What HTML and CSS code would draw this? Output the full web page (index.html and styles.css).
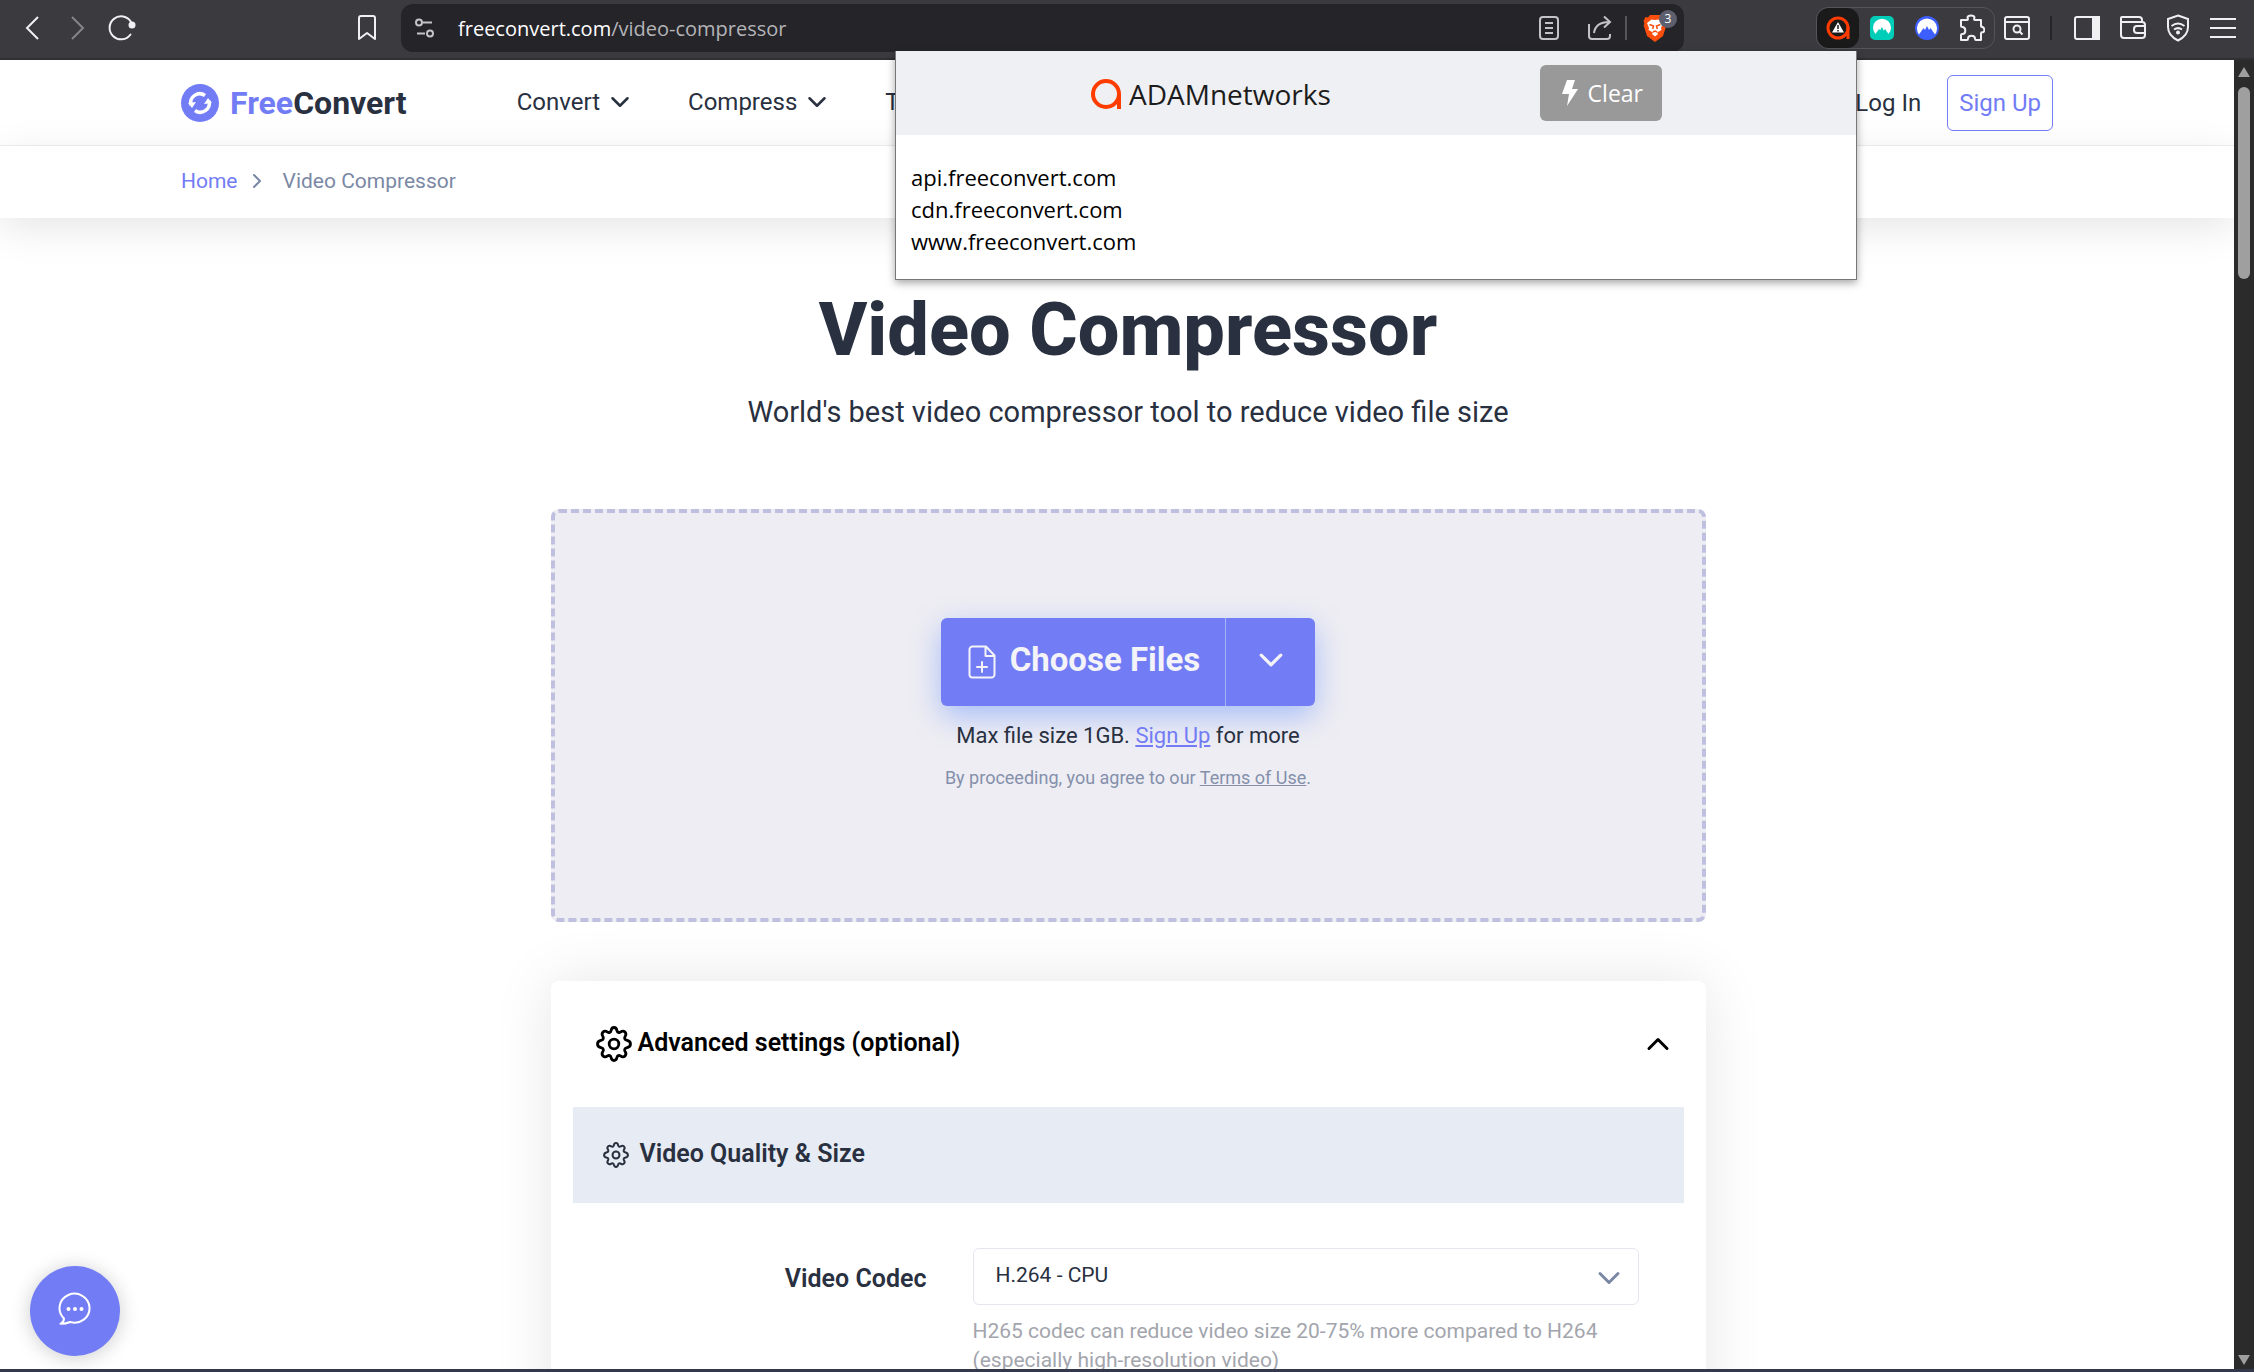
FILE: index.html
```html
<!DOCTYPE html>
<html lang="en">
<head>
    <meta charset="UTF-8">
    <title>Video Compressor</title>
    <link rel="stylesheet" href="styles.css">
</head>
<body>

<!-- icons used more than once -->
<svg class="sprite" aria-hidden="true">
    <symbol id="chevron" viewBox="0 0 24 24">
        <path d="M3 7.500l9 9 9-9" fill="none" stroke="currentColor" stroke-width="3" stroke-linecap="round" stroke-linejoin="round"/>
    </symbol>
    <symbol id="gear" viewBox="0 0 36 36">
        <path d="M18 1.500c1.800 0 2.600 1 3 3.200.3 1.600 2 2.300 3.400 1.400 1.900-1.300 3.300-1.300 4.600 0s1.300 2.700 0 4.600c-.9 1.400-.2 3.100 1.400 3.400 2.200.4 4.100 1.400 4.100 3.900s-1.900 3.500-4.100 3.900c-1.600.3-2.300 2-1.400 3.400 1.300 1.900 1.300 3.300 0 4.600s-2.700 1.300-4.600 0c-1.400-.9-3.100-.2-3.400 1.400-.4 2.200-1.200 3.200-3 3.200s-2.600-1-3-3.200c-.3-1.600-2-2.300-3.400-1.400-1.900 1.300-3.300 1.300-4.600 0s-1.300-2.700 0-4.600c.9-1.400.2-3.100-1.400-3.400-2.200-.4-4.100-1.400-4.100-3.900s1.900-3.500 4.100-3.900c1.600-.3 2.300-2 1.400-3.400-1.300-1.900-1.300-3.300 0-4.600s2.700-1.300 4.600 0c1.400.9 3.100.2 3.400-1.400.4-2.200 1.200-3.200 3-3.200z" fill="none" stroke="currentColor" stroke-width="2.800" stroke-linejoin="round"/>
        <circle cx="18" cy="18" r="4.800" fill="none" stroke="currentColor" stroke-width="2.800"/>
    </symbol>
</svg>

<div class="toolbar">
    <div class="navButtons">
        <button aria-label="Back"><svg width="26" height="26" viewBox="0 0 26 26"><path d="M18 2L7 13l11 11"/></svg></button>
        <button aria-label="Forward" class="dim"><svg width="26" height="26" viewBox="0 0 26 26"><path d="M8 2l11 11L8 24"/></svg></button>
        <button aria-label="Reload"><svg width="28" height="28" viewBox="0 0 28 28"><path d="M22.500 20.500A11.500 11.500 0 1 1 23 8" stroke-linecap="round"/><circle cx="24" cy="11" r="3.500" fill="currentColor" stroke="none"/></svg></button>
    </div>
    <button aria-label="Bookmark" class="bookmark"><svg width="20" height="28" viewBox="0 0 20 28"><path d="M2 4a2 2 0 0 1 2-2h12a2 2 0 0 1 2 2v21l-8-6-8 6z" stroke-linejoin="round"/></svg></button>
    <div class="addressBar">
        <svg width="20" height="20" viewBox="0 0 20 20"><circle cx="4" cy="4.500" r="3"/><path d="M8 4.500h9M2 15.500h8"/><circle cx="15" cy="15.500" r="3"/></svg>
        <div class="url">freeconvert.com<span>/video-compressor</span></div>
        <button aria-label="Reader"><svg width="20" height="24" viewBox="0 0 20 24"><rect x="1" y="1" width="18" height="22" rx="3"/><path d="M6 7h8M6 12h8M6 17h8"/></svg></button>
        <button aria-label="Share" class="share"><svg width="26" height="26" viewBox="0 0 26 26"><path d="M2 9v12a3 3 0 0 0 3 3h15a3 3 0 0 0 3-3v-2M7 18c1-7 6-11 15-11M17 1.500L23 7l-6 5.500"/></svg></button>
        <div class="divider"></div>
        <button aria-label="Shields" class="shields">
            <svg class="filled" width="24" height="28" viewBox="0 0 24 28">
                <path d="M7 1h10l2 2.500 2.500-.5 2 4-.8 2.500.6 2L20 22l-8 6-8-6L.7 11.500l.6-2L.5 7l2-4 2.500.5z" fill="#fb4d0b"/>
                <path d="M8.500 5.500L12 6l3.500-.5L20 9l-2 5 .5 2-4.500 2.500 1 1.500-3 2.500L9 20l1-1.500L5.500 16l.5-2-2-5z" fill="#fff"/>
                <path d="M6.500 10.500l4 1.500-.8 3M17.500 10.500l-4 1.500.8 3M10 18l2-1 2 1" fill="none" stroke="#fb4d0b" stroke-width="1.500"/>
            </svg>
            <span class="badge">3</span>
        </button>
    </div>
    <div class="extensions">
        <button aria-label="ADAMnetworks" class="active"><svg class="filled" width="24" height="24" viewBox="0 0 24 24"><circle cx="12" cy="12" r="10" fill="none" stroke="#ff3c00" stroke-width="3"/><path d="M22 11v12" stroke="#ff3c00" stroke-width="3"/><path d="M12 6l6 10.500H6z" fill="#fff"/><path d="M12 9v4M12 14v1.500" stroke="#1b1a1b" stroke-width="1.500"/></svg></button>
        <button aria-label="NordPass"><svg class="filled" width="24" height="24" viewBox="0 0 24 24"><rect width="24" height="24" rx="5" fill="#00cdb7"/><path d="M5.500 18a9 9 0 1 1 13 0l-3.500-5-1.200 1.700L12 11l-1.800 3.200L9 13z" fill="#fff"/></svg></button>
        <button aria-label="NordVPN"><svg class="filled" width="24" height="24" viewBox="0 0 24 24"><circle cx="12" cy="12" r="12" fill="#3e5fff"/><path d="M4 18.500a10 10 0 1 1 16 0l-4.500-6.500-1.500 2-2-4-2 4-1.500-2z" fill="#fff"/></svg></button>
        <button aria-label="Extensions"><svg width="26" height="28" viewBox="0 0 26 28"><path d="M2 6h6c1 0 1-1 .7-1.800C8 2 10 1.500 12 1.500s4 .5 3.300 2.700C15 5 15 6 16 6h6v6c0 1 1 1 1.500.8 3 2 2 6-.5 5.500-.6 0-1 .4-1 1.200V26h-5c-1 0-1-.6-1-1.300 0-4-7-4-7 0 0 .7 0 1.300-1 1.300H2v-5c0-1 .6-1 1.300-1 4 0 4-7 0-7C2.600 13 2 13 2 12z" stroke-linejoin="round"/></svg></button>
    </div>
    <div class="tools">
        <button aria-label="Find in page"><svg width="26" height="24" viewBox="0 0 26 24"><rect x="1" y="1" width="24" height="22" rx="2"/><path d="M1 6h24M15.500 15.500l3 3"/><circle cx="13" cy="13" r="3.500"/></svg></button>
        <div class="divider dark"></div>
        <button aria-label="Sidebar"><svg width="26" height="24" viewBox="0 0 26 24"><rect x="1" y="1" width="24" height="22" rx="2"/><path d="M19 1h6v22h-6z" fill="currentColor"/></svg></button>
        <button aria-label="Wallet"><svg width="26" height="24" viewBox="0 0 26 24"><path d="M22 6V4a3 3 0 0 0-3-3H2a1 1 0 0 0-1 1v17a3 3 0 0 0 3 3h18a3 3 0 0 0 3-3V9a3 3 0 0 0-3-3H2M25 10h-8a3 3 0 0 0-3 3v1a3 3 0 0 0 3 3h8"/></svg></button>
        <button aria-label="VPN"><svg width="24" height="28" viewBox="0 0 24 28"><path d="M12 1.500L22 5v8c0 7-4 10.500-10 13.500C6 23.500 2 20 2 13V5zM5.500 12c4-3 9-3 13 0M8 15.500c2.500-1.700 5.500-1.700 8 0"/><circle cx="12" cy="18.500" r="1" fill="currentColor"/></svg></button>
        <button aria-label="Menu"><svg width="26" height="22" viewBox="0 0 26 22"><path d="M0 2h26M0 11h26M0 20h26"/></svg></button>
    </div>
</div>

<div class="window">
    <div class="page">
        <header class="siteHeader">
            <a class="logo" href="#">
                <svg width="38" height="38" viewBox="0 0 38 38"><circle cx="19" cy="19" r="19" fill="#727cf5"/><path d="M10 21a9 9 0 0 1 14-9.500M28 17a9 9 0 0 1-14 9.500" fill="none" stroke="#fff" stroke-width="3.500"/><path d="M7 19l8-1-4 6zM31 19l-8 1 4-6z" fill="#fff"/></svg>
                <span class="free">Free</span>Convert
            </a>
            <nav>
                <a href="#">Convert <svg class="arrow"><use href="#chevron"/></svg></a>
                <a href="#">Compress <svg class="arrow"><use href="#chevron"/></svg></a>
                <a href="#">Tools <svg class="arrow"><use href="#chevron"/></svg></a>
            </nav>
            <div class="account">
                <a href="#">Log In</a>
                <a class="signUp" href="#">Sign Up</a>
            </div>
        </header>
        <div class="breadcrumb">
            <a href="#">Home</a>
            <svg class="arrow"><use href="#chevron"/></svg>
            <span>Video Compressor</span>
        </div>

        <main>
            <h1>Video Compressor</h1>
            <p class="subtitle">World's best video compressor tool to reduce video file size</p>

            <div class="dropZone">
                <div class="chooser">
                    <button class="choose">
                        <svg width="28" height="34" viewBox="0 0 28 34"><path d="M4.500 1.500H18l8.500 9v19a3 3 0 0 1-3 3h-19a3 3 0 0 1-3-3v-25a3 3 0 0 1 3-3zM17.500 2v9H26M14 17v10M9 22h10"/></svg>
                        <span>Choose Files</span>
                    </button>
                    <button class="more" aria-label="More sources"><svg class="arrow"><use href="#chevron"/></svg></button>
                </div>
                <p class="limit">Max file size 1GB. <a href="#">Sign Up</a> for more</p>
                <p class="terms">By proceeding, you agree to our <a href="#">Terms of Use</a>.</p>
            </div>

            <section class="settings">
                <button class="settingsHead">
                    <svg class="gear"><use href="#gear"/></svg>
                    <span>Advanced settings (optional)</span>
                    <svg class="arrow up"><use href="#chevron"/></svg>
                </button>
                <h2><svg class="gear"><use href="#gear"/></svg><span>Video Quality &amp; Size</span></h2>
                <div class="field">
                    <label for="codec">Video Codec</label>
                    <div class="control">
                        <div class="selectBox">
                            <select id="codec">
                                <option>H.264 - CPU</option>
                                <option>H.265</option>
                            </select>
                            <svg class="arrow"><use href="#chevron"/></svg>
                        </div>
                        <p>H265 codec can reduce video size 20-75% more compared to H264 (especially high-resolution video)</p>
                    </div>
                </div>
            </section>
        </main>

        <button class="chat" aria-label="Chat">
            <svg width="34" height="34" viewBox="0 0 34 34"><path d="M6 26.500A15 14.500 0 1 1 12 30c-3 1.300-6 2-9.500 1.800C5 30.500 6 29 6 26.500z" fill="none" stroke="#fff" stroke-width="2" stroke-linejoin="round"/><g fill="#fff"><circle cx="10.500" cy="17" r="2"/><circle cx="17" cy="17" r="2"/><circle cx="23.500" cy="17" r="2"/></g></svg>
        </button>
    </div>
    <div class="scrollbar">
        <i class="up"></i>
        <div class="thumb"></div>
        <i class="down"></i>
    </div>
</div>

<!-- extension popup -->
<div class="popup">
    <div class="popupHead">
        <div class="brand">
            <svg width="32" height="32" viewBox="0 0 32 32"><circle cx="16" cy="16" r="13" fill="none" stroke="#ff3c00" stroke-width="4"/><path d="M29 16v15" stroke="#ff3c00" stroke-width="4"/></svg>
            ADAMnetworks
        </div>
        <button><svg width="16" height="26" viewBox="0 0 16 26"><path d="M5 0h8l-3 9h6L5 26l2-12H0z" fill="#fff"/></svg>Clear</button>
    </div>
    <ul>
        <li>api.freeconvert.com</li>
        <li>cdn.freeconvert.com</li>
        <li>www.freeconvert.com</li>
    </ul>
</div>

</body>
</html>
```
FILE: styles.css
```css
* {
    box-sizing: border-box;
}

body {
    margin: 0;
    height: 100vh;
    display: flex;
    flex-direction: column;
    overflow: hidden;
    font-family: Roboto, "Liberation Sans", sans-serif;
    color: #29303f;
    border-bottom: 3px solid #33384a;
}

button {
    font: inherit;
    color: inherit;
    border: 0;
    padding: 0;
    background: none;
}

a {
    color: inherit;
    text-decoration: none;
}

.sprite {
    display: none;
}

.arrow {
    width: 20px;
    height: 20px;
}

/* browser toolbar */
.toolbar {
    flex: none;
    display: flex;
    align-items: center;
    height: 60px;
    padding: 0 18px 2px 20px;
    background: #3b3a3f;
    border-bottom: 2px solid #2f2e33;
    color: #f0f0f2;
    font-family: "Open Sans", sans-serif;
}

.toolbar button {
    display: flex;
    align-items: center;
    justify-content: center;
}

.toolbar svg:not(.filled) {
    fill: none;
    stroke: currentColor;
    stroke-width: 2;
}

.navButtons {
    display: flex;
    gap: 18px;
}

.navButtons .dim {
    color: #85848a;
}

.bookmark {
    margin-left: auto;
}

.addressBar {
    display: flex;
    align-items: center;
    width: 1283px;
    height: 48px;
    margin-left: 24px;
    padding: 0 7px 0 14px;
    border-radius: 12px;
    background: #252429;
    color: #c4c4c8;
}

.url {
    flex: 1;
    margin-left: 23px;
    font-size: 20px;
    color: #fff;
}

.url span {
    color: #b4b4b8;
}

.share {
    margin-left: 28px;
}

.divider {
    width: 2px;
    height: 24px;
    margin: 0 16px 0 12px;
    background: #55545a;
}

.divider.dark {
    margin: 0;
    background: #252429;
}

.shields {
    position: relative;
    width: 34px;
    height: 48px;
}

.toolbar .shields {
    justify-content: flex-start;
}

.badge {
    position: absolute;
    top: 6px;
    right: 0;
    width: 18px;
    height: 18px;
    border-radius: 9px;
    background: #5d5f6e;
    color: #fff;
    font-size: 12px;
    line-height: 18px;
}

.extensions {
    display: flex;
    align-items: center;
    margin-left: 132px;
    height: 42px;
    border: 1px solid #55545a;
    border-radius: 12px;
}

.extensions button {
    width: 45px;
    height: 40px;
}

.extensions .active {
    width: 42px;
    border-radius: 12px;
    background: #1b1a1b;
}

.tools {
    display: flex;
    align-items: center;
    gap: 20px;
    margin-left: 9px;
}

.tools .divider {
    margin-right: 2px;
}

/* page area with its scrollbar */
.window {
    flex: 1;
    min-height: 0;
    display: flex;
}

.page {
    position: relative;
    flex: 1;
    overflow: hidden;
}

.scrollbar {
    display: flex;
    flex-direction: column;
    align-items: center;
    width: 20px;
    padding: 7px 0 4px;
    background: #2b2b2b;
}

.scrollbar i {
    border: 6px solid transparent;
}

.scrollbar .up {
    border-top: 0;
    border-bottom: 10px solid #9f9f9f;
}

.scrollbar .down {
    margin-top: auto;
    border-bottom: 0;
    border-top: 10px solid #9f9f9f;
}

.thumb {
    width: 12px;
    height: 192px;
    margin-top: 10px;
    border-radius: 6px;
    background: #9f9f9f;
}

.siteHeader {
    display: flex;
    align-items: center;
    height: 86px;
    padding: 0 181px;
    border-bottom: 1px solid #efeff1;
    font-size: 24px;
}

.logo {
    display: flex;
    align-items: center;
    font-size: 32px;
    font-weight: 700;
}

.logo svg {
    margin-right: 11px;
}

.free {
    color: #727cf5;
}

nav {
    display: flex;
    gap: 58px;
    margin-left: 110px;
    padding-bottom: 2px;
}

nav a {
    display: flex;
    align-items: center;
    gap: 10px;
}

.account {
    display: flex;
    align-items: center;
    gap: 26px;
    margin-left: auto;
}

.signUp {
    padding: 13px 11px;
    border: 1px solid #727cf5;
    border-radius: 6px;
    color: #727cf5;
}

.breadcrumb {
    display: flex;
    align-items: center;
    height: 72px;
    padding: 0 181px 2px;
    font-size: 21px;
    color: #7b88a5;
    box-shadow: 0 10px 40px rgba(0, 0, 0, 0.1);
}

.breadcrumb a {
    color: #727cf5;
}

.breadcrumb .arrow {
    width: 16px;
    height: 16px;
    margin: 0 18px 0 11px;
    transform: rotate(-90deg);
}

/* left padding balances the scrollbar, so the content is centred on the window */
main {
    width: 1177px;
    margin: 0 auto;
    padding: 68px 0 0 22px;
    text-align: center;
}

h1 {
    margin: 0;
    font-size: 74px;
    line-height: 88px;
    font-weight: 800;
}

.subtitle {
    margin: 20px 0 79px;
    font-size: 29px;
    line-height: 36px;
}

.dropZone {
    display: flex;
    flex-direction: column;
    align-items: center;
    height: 413px;
    padding-top: 105px;
    border: 4px dashed #bfc0df;
    border-radius: 8px;
    background: #eeedf3;
}

.chooser {
    display: flex;
    height: 88px;
    border-radius: 6px;
    background: #727cf5;
    color: #f3f3f8;
    box-shadow: 0 10px 30px rgba(60, 120, 255, 0.4);
}

.choose {
    display: flex;
    align-items: center;
    gap: 14px;
    padding: 0 25px 0 27px;
    font-size: 33px;
    font-weight: 700;
}

.choose span {
    padding-bottom: 6px;
}

.choose svg {
    fill: none;
    stroke: currentColor;
    stroke-width: 2;
    stroke-linejoin: round;
    stroke-linecap: round;
}

.more {
    width: 90px;
    border-left: 1px solid #a5b4f5;
}

.more .arrow {
    width: 26px;
    height: 26px;
}

.limit {
    margin: 16px 0;
    font-size: 22px;
    line-height: 28px;
}

.limit a {
    color: #727cf5;
    text-decoration: underline;
}

.terms {
    margin: 0;
    font-size: 18px;
    line-height: 24px;
    color: #8490ab;
}

.terms a {
    text-decoration: underline;
}

.settings {
    margin-top: 59px;
    padding: 0 22px;
    border-radius: 8px;
    background: #fff;
    box-shadow: 0 0 60px rgba(0, 0, 0, 0.1);
}

.settingsHead {
    display: flex;
    align-items: center;
    gap: 6px;
    width: 100%;
    height: 126px;
    padding: 0 14px 0 23px;
    font-size: 25px;
    font-weight: 600;
    color: #000;
}

.settingsHead span,
h2 span {
    padding-bottom: 4px;
}

.settingsHead .gear {
    width: 36px;
    height: 36px;
}

.settingsHead .arrow {
    width: 24px;
    height: 24px;
    margin-left: auto;
    transform: rotate(180deg);
}

h2 {
    display: flex;
    align-items: center;
    gap: 11px;
    height: 96px;
    margin: 0;
    padding-left: 30px;
    font-size: 25px;
    font-weight: 600;
    background: #e7ebf3;
}

h2 .gear {
    width: 26px;
    height: 26px;
}

.field {
    display: grid;
    grid-template-columns: 354px 1fr;
    gap: 46px;
    padding: 45px 45px 60px 0;
}

.field label {
    padding-top: 16px;
    text-align: right;
    font-size: 25px;
    font-weight: 600;
}

.control {
    text-align: left;
}

.selectBox {
    position: relative;
}

select {
    appearance: none;
    width: 100%;
    height: 57px;
    padding: 0 22px 4px;
    border: 1px solid #e4e7f0;
    border-radius: 6px;
    background: #fff;
    font: inherit;
    font-size: 21px;
    color: inherit;
}

.selectBox .arrow {
    position: absolute;
    top: 18px;
    right: 18px;
    width: 24px;
    height: 24px;
    color: #7b88a5;
}

.control p {
    margin: 12px 0 0;
    font-size: 21px;
    line-height: 29px;
    color: #a3a5ad;
}

.chat {
    position: absolute;
    left: 30px;
    bottom: 13px;
    width: 90px;
    height: 90px;
    border-radius: 50%;
    background: #727cf5;
    box-shadow: 0 2px 20px rgba(0, 0, 0, 0.2);
}

/* popup hangs from the toolbar over the page */
.popup {
    position: absolute;
    top: 51px;
    right: 397px;
    width: 962px;
    border: 1px solid #77777a;
    border-top: 0;
    background: #fff;
    box-shadow: 0 3px 8px rgba(0, 0, 0, 0.35);
    color: #000;
    font-family: "Open Sans", sans-serif;
}

.popupHead {
    display: flex;
    align-items: center;
    justify-content: space-between;
    height: 84px;
    padding: 0 194px;
    background: #eff0f3;
}

.brand {
    display: flex;
    align-items: center;
    gap: 7px;
    padding-top: 2px;
    font-size: 28px;
    color: #1c1c1c;
}

.popup button {
    display: flex;
    align-items: center;
    gap: 10px;
    height: 56px;
    padding: 0 19px 0 22px;
    border-radius: 6px;
    background: #999;
    color: #fff;
    font-size: 23px;
}

.popup ul {
    margin: 0;
    padding: 26px 15px 22px;
    list-style: none;
    font-size: 22px;
    line-height: 32px;
}
```
